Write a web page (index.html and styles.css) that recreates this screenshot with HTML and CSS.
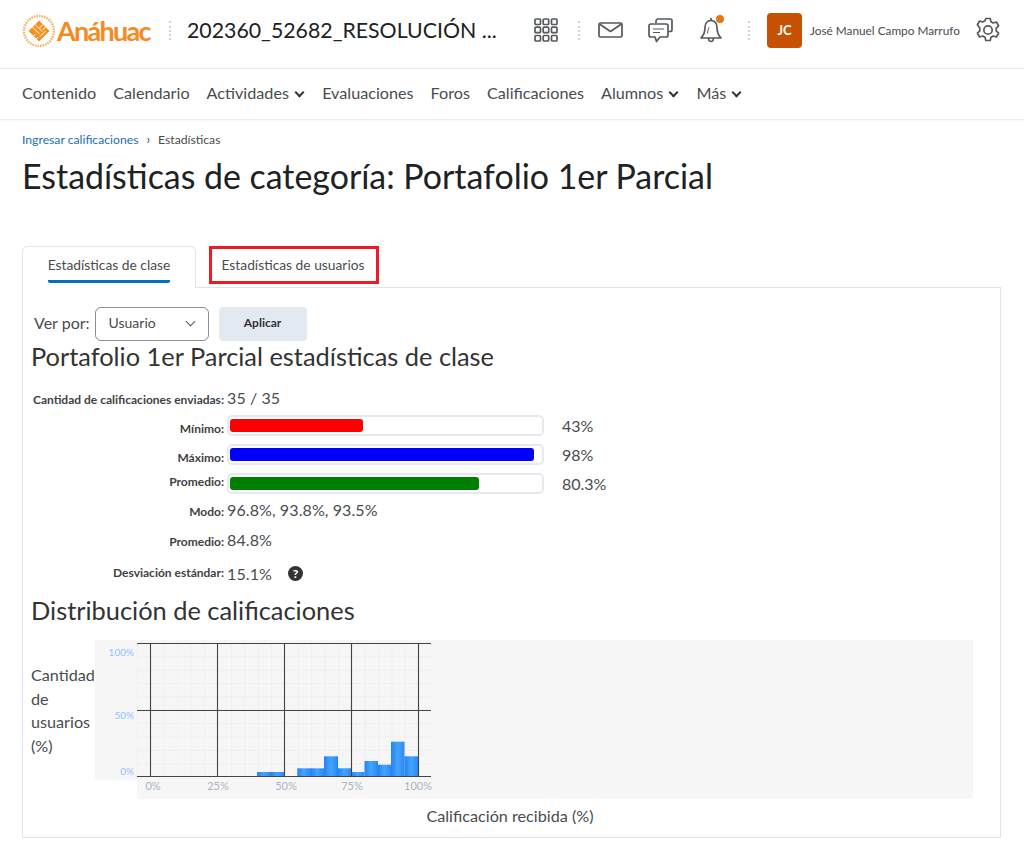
FILE: index.html
```html
<!DOCTYPE html>
<html lang="es">
<head>
    <meta charset="UTF-8">
    <title>Estadísticas de categoría</title>
    <link rel="stylesheet" href="styles.css">
</head>
<body>
    <header class="topbar">
        <div class="logo">
            <svg class="logo-mark" width="34" height="34" viewBox="0 0 34 34">
                <circle cx="17" cy="17" r="15" fill="none" stroke="#f7b26a" stroke-width="2.4" stroke-dasharray="1.6 1"/>
                <path d="M17 6.5 27.5 17 17 27.5 6.5 17Z" fill="#f5911e"/>
                <path d="M13 10.5 20 17.500M10.500 13 17.500 20M21 10.500 17.500 14M23.500 13 20.500 16M13.500 20 10.500 23M16 23 13.500 25.500M20 20.500 23.500 17M17.500 23 20.500 20" stroke="#fff" stroke-width="1" fill="none"/>
            </svg>
            <span class="logo-text">Anáhuac</span>
        </div>
        <span class="dots dots-title"></span>
        <div class="course-title">202360_52682_RESOLUCIÓN ...</div>
        <svg class="icon icon-grid" width="24" height="24" viewBox="0 0 24 24" fill="none" stroke="#565a5c" stroke-width="1.7">
            <rect x="1" y="1" width="5.500" height="5.500" rx="1"/><rect x="9.200" y="1" width="5.500" height="5.500" rx="1"/><rect x="17.500" y="1" width="5.500" height="5.500" rx="1"/>
            <rect x="1" y="9.200" width="5.500" height="5.500" rx="1"/><rect x="9.200" y="9.200" width="5.500" height="5.500" rx="1"/><rect x="17.500" y="9.200" width="5.500" height="5.500" rx="1"/>
            <rect x="1" y="17.500" width="5.500" height="5.500" rx="1"/><rect x="9.200" y="17.500" width="5.500" height="5.500" rx="1"/><rect x="17.500" y="17.500" width="5.500" height="5.500" rx="1"/>
        </svg>
        <span class="dots dots-grid"></span>
        <svg class="icon icon-mail" width="25" height="16" viewBox="0 0 25 16" fill="none" stroke="#565a5c" stroke-width="1.700" stroke-linejoin="round">
            <rect x="1" y="1" width="23" height="14" rx="1.500"/>
            <path d="M1.500 2 12.500 9.500 23.500 2"/>
        </svg>
        <svg class="icon icon-chat" width="25" height="25" viewBox="0 0 25 25" fill="none" stroke="#565a5c" stroke-width="1.700" stroke-linejoin="round">
            <path d="M8 5V3a2 2 0 0 1 2-2h12.500a1.500 1.500 0 0 1 1.500 1.500v9a2 2 0 0 1-2 2h-1.500"/>
            <path d="M3 6h15a2 2 0 0 1 2 2v9a2 2 0 0 1-2 2h-6l-3.500 4.500L7 19H3a2 2 0 0 1-2-2V8a2 2 0 0 1 2-2Z"/>
            <path d="M5 11h11M5 14.500h7" stroke-width="1.200"/>
        </svg>
        <div class="bell">
            <svg width="23" height="26" viewBox="0 0 23 26" fill="none" stroke="#565a5c" stroke-width="1.700" stroke-linejoin="round" stroke-linecap="round">
                <path d="M11 1.500v2"/>
                <path d="M11 3.500c-4 0-6 3-6 7 0 5-1.500 8-4 10.500h20c-2.500-2.500-4-5.500-4-10.500 0-4-2-7-6-7Z"/>
                <path d="M8.500 21.500c.2 2 1.200 3 2.500 3s2.300-1 2.500-3"/>
                <path d="M7.500 16c.3-2 .5-3.500 1.500-5.500" stroke-width="1"/>
            </svg>
            <span class="bell-dot"></span>
        </div>
        <span class="dots dots-bell"></span>
        <div class="avatar">JC</div>
        <div class="user-name">José Manuel Campo Marrufo</div>
        <svg class="icon" width="26" height="26" viewBox="0 0 26 26" fill="none" stroke="#565a5c" stroke-width="1.700" stroke-linejoin="round">
            <circle cx="13" cy="13" r="4.200"/>
            <path d="M10.800 1.500h4.400l.8 3.300 2.200 1.200 3.200-1 2.200 3.800-2.400 2.300v2.800l2.400 2.300-2.200 3.800-3.200-1-2.200 1.200-.8 3.300h-4.400l-.8-3.300-2.200-1.200-3.200 1-2.200-3.800 2.400-2.300v-2.800L2.400 7.800l2.200-3.800 3.200 1L10 3.800Z"/>
        </svg>
    </header>

    <nav class="course-nav">
        <a href="#">Contenido</a>
        <a href="#">Calendario</a>
        <a href="#">Actividades <span class="chev"></span></a>
        <a href="#">Evaluaciones</a>
        <a href="#">Foros</a>
        <a href="#">Calificaciones</a>
        <a href="#">Alumnos <span class="chev"></span></a>
        <a href="#">Más <span class="chev"></span></a>
    </nav>

    <main class="main-content">
        <div class="breadcrumbs"><a href="#">Ingresar calificaciones</a><span class="crumb-sep">›</span><span>Estadísticas</span></div>
        <h1>Estadísticas de categoría: Portafolio 1er Parcial</h1>

        <div class="tabs">
            <div class="tab active"><span>Estadísticas de clase</span></div>
            <div class="tab marked"><span>Estadísticas de usuarios</span></div>
        </div>

        <section class="panel">
            <div class="filter">
                <label>Ver por:</label>
                <div class="select">Usuario <span class="chev thin"></span></div>
                <button class="apply">Aplicar</button>
            </div>

            <h2>Portafolio 1er Parcial estadísticas de clase</h2>

            <div class="stats">
                <div class="stat first">
                    <div class="stat-label">Cantidad de calificaciones enviadas:</div>
                    <div class="stat-value">35 / 35</div>
                </div>
                <div class="stat bar-row low">
                    <div class="stat-label">Mínimo:</div>
                    <div class="track"><div class="fill red" style="width: 43%"></div></div>
                    <div class="stat-pct">43%</div>
                </div>
                <div class="stat bar-row low">
                    <div class="stat-label">Máximo:</div>
                    <div class="track"><div class="fill blue" style="width: 98%"></div></div>
                    <div class="stat-pct">98%</div>
                </div>
                <div class="stat bar-row">
                    <div class="stat-label">Promedio:</div>
                    <div class="track"><div class="fill green" style="width: 80.3%"></div></div>
                    <div class="stat-pct">80.3%</div>
                </div>
                <div class="stat text-row mode">
                    <div class="stat-label">Modo:</div>
                    <div class="stat-value">96.8%, 93.8%, 93.5%</div>
                </div>
                <div class="stat text-row">
                    <div class="stat-label">Promedio:</div>
                    <div class="stat-value">84.8%</div>
                </div>
                <div class="stat text-row last">
                    <div class="stat-label">Desviación estándar:</div>
                    <div class="stat-value">15.1%</div>
                    <span class="help">?</span>
                </div>
            </div>

            <h2 class="dist">Distribución de calificaciones</h2>

            <div class="chart-row">
                <div class="y-title">Cantidad<br>de<br>usuarios<br>(%)</div>
                <svg class="chart" width="878" height="159" viewBox="0 0 878 159">
                    <defs>
                        <pattern id="minor" patternUnits="userSpaceOnUse" x="42" y="3" width="13.400" height="13.350">
                            <path d="M0 0V13.350M0 0H13.400" stroke="#e8e8e8" stroke-width="1" fill="none"/>
                        </pattern>
                        <linearGradient id="barfill" gradientUnits="userSpaceOnUse" x1="162" y1="0" x2="175.400" y2="0" spreadMethod="repeat">
                            <stop offset="0" stop-color="#2382f2"/>
                            <stop offset="0.5" stop-color="#45a3ff"/>
                            <stop offset="1" stop-color="#2a8af6"/>
                        </linearGradient>
                    </defs>
                    <rect width="878" height="140" fill="#f6f6f6"/>
                    <rect x="42" y="140" width="836" height="19" fill="#f6f6f6"/>
                    <rect x="42" y="3" width="294" height="134" fill="url(#minor)"/>
                    <g fill="url(#barfill)">
                        <rect x="162" y="132" width="27.500" height="4.500"/>
                        <rect x="202.300" y="128.300" width="26.700" height="8.200"/>
                        <rect x="229" y="116.300" width="14" height="20.200"/>
                        <rect x="243" y="128.300" width="13.500" height="8.200"/>
                        <rect x="256.500" y="132" width="13" height="4.500"/>
                        <rect x="269.500" y="121" width="13.500" height="15.500"/>
                        <rect x="283" y="124.700" width="13" height="11.800"/>
                        <rect x="296" y="101.700" width="13.500" height="34.800"/>
                        <rect x="309.500" y="116.300" width="13.500" height="20.200"/>
                    </g>
                    <g stroke="#444" stroke-width="1.100" fill="none">
                        <path d="M42 3.500H336M42 70.500H336M42 136.500H336"/>
                        <path d="M55.500 3V137M122.500 3V137M189.500 3V137M256.500 3V137M323.500 3V137"/>
                    </g>
                    <g class="y-ticks" text-anchor="end">
                        <text x="39" y="16">100%</text>
                        <text x="39" y="79">50%</text>
                        <text x="39" y="135">0%</text>
                    </g>
                    <g class="x-ticks" text-anchor="middle">
                        <text x="58" y="150">0%</text>
                        <text x="123" y="150">25%</text>
                        <text x="191" y="150">50%</text>
                        <text x="257" y="150">75%</text>
                        <text x="323" y="150">100%</text>
                    </g>
                </svg>
            </div>
            <div class="x-title">Calificación recibida (%)</div>
        </section>
    </main>
</body>
</html>
```
FILE: styles.css
```css
body {
    margin: 0;
    background-color: #ffffff;
    color: #494c4e;
    font-family: Lato, "Open Sans", sans-serif;
    overflow: hidden;
}

a {
    color: inherit;
    text-decoration: none;
}

/* Top bar */
.topbar {
    display: flex;
    align-items: center;
    box-sizing: content-box;
    height: 60px;
    padding: 0 23px 8px 22px;
    border-bottom: 1px solid #ececec;
}

.logo {
    display: flex;
    align-items: center;
    width: 147px;
    margin-top: 1px;
}

.logo-mark {
    flex: none;
}

.logo-text {
    margin-left: 1px;
    color: #f58a1f;
    font-size: 27px;
    font-weight: 700;
    letter-spacing: -1.700px;
}

.dots {
    width: 0;
    height: 19px;
    border-left: 2px dotted #cdd5dc;
    flex: none;
}

.course-title {
    width: 330px;
    margin-left: 16px;
    color: #202122;
    font-size: 21.300px;
    white-space: nowrap;
}

.icon {
    flex: none;
}

.icon-grid {
    margin-left: 17px;
}

.dots-grid {
    margin-left: 20px;
}

.icon-mail {
    margin-left: 18px;
}

.icon-chat {
    margin-left: 25px;
}

.bell {
    position: relative;
    height: 26px;
    margin-left: 27px;
}

.bell-dot {
    position: absolute;
    top: -2px;
    right: -1px;
    width: 8px;
    height: 8px;
    border-radius: 50%;
    background-color: #e87511;
}

.dots-bell {
    margin-left: 25px;
}

.avatar {
    flex: none;
    width: 35px;
    height: 35px;
    margin-left: 17px;
    border-radius: 4px;
    background-color: #c75204;
    color: #ffffff;
    font-size: 13px;
    font-weight: 700;
    line-height: 35px;
    text-align: center;
}

.user-name {
    width: 165px;
    margin-left: 8px;
    font-size: 11.800px;
    white-space: nowrap;
}

/* Course nav */
.course-nav {
    display: flex;
    align-items: center;
    gap: 17px;
    height: 46px;
    padding: 0 22px 4px 22px;
    border-bottom: 1px solid #ececec;
    box-shadow: 0 1px 2px rgba(0, 0, 0, 0.03);
    font-size: 16.200px;
}

.chev {
    display: inline-block;
    width: 5px;
    height: 5px;
    margin: 0 2px 3px 3px;
    border-right: 2px solid #333;
    border-bottom: 2px solid #333;
    transform: rotate(45deg);
}

.chev.thin {
    width: 6px;
    height: 6px;
    border-width: 1.500px;
    border-color: #565a5c;
    margin: 0 2px 3px 0;
}

/* Page */
.main-content {
    padding: 0 23px 0 22px;
}

.breadcrumbs {
    display: flex;
    align-items: center;
    margin-top: 11px;
    height: 16px;
    font-size: 12.200px;
}

.breadcrumbs a {
    color: #1c6fb5;
}

.crumb-sep {
    margin: 0 8px;
    font-size: 13px;
}

h1 {
    margin: 7px 0 0 0;
    color: #202122;
    font-size: 33.900px;
    font-weight: 400;
    line-height: 44px;
}

.tabs {
    display: flex;
    margin-top: 48px;
    height: 41px;
}

.tab {
    box-sizing: border-box;
    font-size: 13.800px;
    text-align: center;
}

.tab.active {
    width: 174px;
    height: 42px;
    border: 1px solid #dfe3ea;
    border-bottom: none;
    border-radius: 6px 6px 0 0;
    background-color: #ffffff;
    position: relative;
    z-index: 1;
    padding-top: 9px;
}

.tab.active span {
    display: inline-block;
    padding-bottom: 7px;
    border-bottom: 3px solid #006fbf;
    border-radius: 0 0 2px 2px;
}

.tab.marked {
    width: 170px;
    height: 38px;
    margin-left: 13px;
    padding-right: 2px;
    border: 3px solid #ed1c24;
    line-height: 32px;
}

.panel {
    box-sizing: border-box;
    height: 551px;
    padding: 19px 12px 0 9px;
    border: 1px solid #dfe3ea;
}

.filter {
    display: flex;
    align-items: center;
    margin-left: 2px;
}

.filter label {
    padding-bottom: 3px;
    font-size: 16px;
}

.select {
    box-sizing: border-box;
    display: flex;
    align-items: center;
    justify-content: space-between;
    width: 114px;
    height: 34px;
    margin-left: 5px;
    padding: 0 12px 3px 13px;
    border: 1px solid #8a8f94;
    border-radius: 6px;
    font-size: 14px;
}

.apply {
    width: 88px;
    height: 34px;
    margin-left: 10px;
    padding: 0 0 3px 0;
    border: none;
    border-radius: 4px;
    background-color: #e3e9f1;
    color: #333;
    font-family: inherit;
    font-size: 12px;
    font-weight: 700;
}

h2 {
    margin: -1px 0 0 -1px;
    color: #333;
    font-size: 25.400px;
    font-weight: 400;
    line-height: 32px;
}

.stats {
    margin-top: 11px;
}

.stat {
    display: flex;
}

.stat-label {
    flex: none;
    width: 192px;
    font-size: 12px;
    font-weight: 700;
    text-align: right;
    color: #3f4244;
}

.stat-value {
    margin-left: 3px;
    font-size: 16px;
    letter-spacing: 0.100px;
}

.stat-pct {
    margin-left: 18px;
    font-size: 16px;
    line-height: 21px;
}

.stat.first {
    align-items: flex-end;
    height: 24px;
}

.bar-row {
    height: 21px;
    margin-top: 8px;
}

.bar-row .stat-label {
    line-height: 18px;
}

.bar-row.low .stat-label {
    padding-top: 5px;
}

.track {
    box-sizing: border-box;
    width: 317px;
    height: 21px;
    margin-left: 3px;
    padding: 2px 2px 2px 1px;
    border: 2px solid #e6eaf0;
    border-radius: 5px;
}

.fill {
    height: 13px;
    border-radius: 3px;
}

.red {
    background-color: #ff0000;
}

.blue {
    background-color: #0000ff;
}

.green {
    background-color: #008000;
}

.text-row {
    align-items: center;
    height: 21px;
    margin-top: 9px;
}

.text-row.mode {
    margin-top: 5px;
}

.text-row .stat-label {
    padding-top: 4px;
}

.text-row.last {
    margin-top: 13px;
}

.text-row.last .stat-label {
    padding: 0 0 3px 0;
}

.help {
    width: 15px;
    height: 15px;
    margin-left: 16px;
    border-radius: 50%;
    background-color: #333;
    color: #ffffff;
    font-size: 12px;
    font-weight: 900;
    line-height: 15px;
    text-align: center;
}

h2.dist {
    margin-top: 10px;
}

.chart-row {
    display: flex;
    margin-top: 14px;
}

.y-title {
    width: 64px;
    margin-left: -1px;
    padding-top: 23px;
    font-size: 16.200px;
    line-height: 23.500px;
}

.chart {
    display: block;
}

.y-ticks text {
    fill: #8fc4fb;
    font-size: 10px;
}

.x-ticks text {
    fill: #aab4c3;
    font-size: 11px;
}

.x-title {
    margin-top: 7px;
    font-size: 16.200px;
    text-align: center;
}
```
